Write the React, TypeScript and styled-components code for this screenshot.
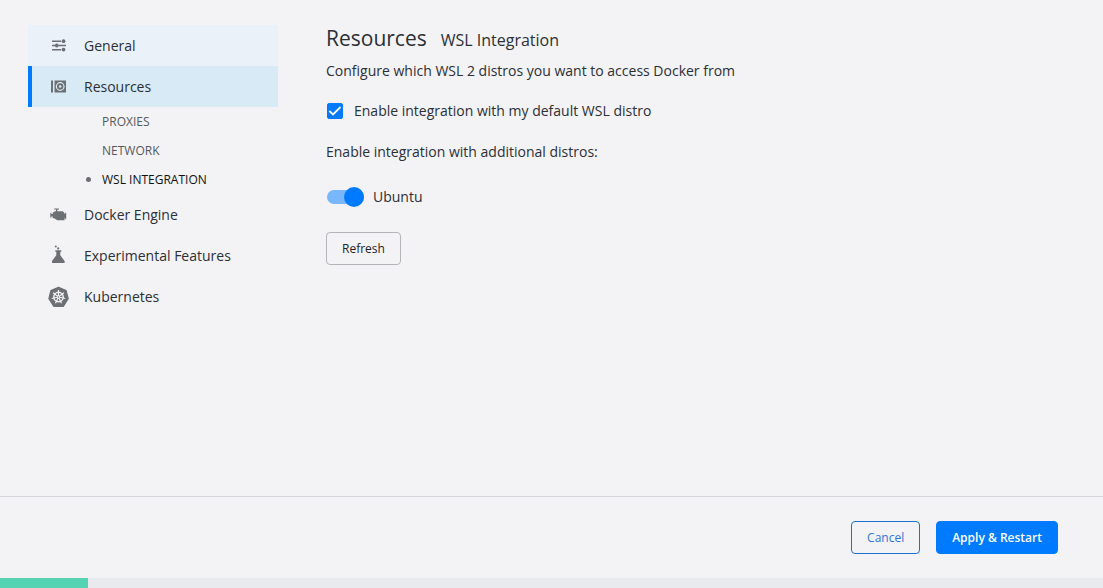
import React, { useState } from 'react';
import styled, { createGlobalStyle, css } from 'styled-components';

const GlobalStyle = createGlobalStyle`
  *, *::before, *::after { box-sizing: border-box; }
  body {
    margin: 0;
    background: #f3f3f6;
    color: #2b2f36;
    font-family: "Open Sans", "Noto Sans", sans-serif;
    font-size: 14px;
    line-height: 20px;
  }
  button, input { font-family: inherit; }
`;

const Page = styled.div`
  display: flex;
  flex-direction: column;
  min-height: 100vh;
`;

const Body = styled.div`
  display: flex;
  flex: 1;
  gap: 48px;
  padding: 25px 28px;
`;

const Sidebar = styled.nav`
  flex: 0 0 250px;
`;

const NavList = styled.ul`
  margin: 0;
  padding: 0;
  list-style: none;
`;

const NavLink = styled.a<{ $state?: 'hover' | 'active' }>`
  display: flex;
  align-items: center;
  gap: 14px;
  height: 41px;
  padding-left: 16px;
  border-left: 4px solid transparent;
  color: #2b2f36;
  text-decoration: none;
  ${({ $state }) => $state === 'hover' && css`
    background: #ebf1f8;
    border-left-color: #ebf1f8;
  `}
  ${({ $state }) => $state === 'active' && css`
    background: #d8eaf6;
    border-left-color: #007bff;
  `}
`;

const NavIcon = styled.svg`
  flex: none;
  width: 22px;
  height: 22px;
  fill: #6c6f73;
`;

const SubLink = styled.a<{ $current?: boolean }>`
  display: flex;
  align-items: center;
  gap: 11px;
  height: 29px;
  padding-left: 58px;
  color: ${({ $current }) => ($current ? '#111111' : '#55585e')};
  font-size: 12px;
  text-decoration: none;
  &::before {
    content: '';
    width: 5px;
    height: 5px;
    border-radius: 50%;
    background: ${({ $current }) => ($current ? '#6c6f73' : 'transparent')};
  }
`;

const Main = styled.main`
  display: flex;
  flex: 1;
  flex-direction: column;
  align-items: flex-start;
`;

const Header = styled.header`
  display: flex;
  align-items: baseline;
  gap: 14px;
`;

const Title = styled.h1`
  margin: 0;
  font-size: 21px;
  font-weight: 400;
  line-height: 26px;
`;

const Subtitle = styled.h2`
  margin: 0;
  font-size: 16px;
  font-weight: 400;
  line-height: 26px;
`;

const Text = styled.p`
  margin: 8px 0 0;
`;

const Choice = styled.label`
  display: flex;
  align-items: center;
  gap: 11px;
  margin: 20px 0 13px;
  padding-left: 1px;
`;

const Checkbox = styled.input`
  appearance: none;
  width: 16px;
  height: 16px;
  margin: 0;
  border: 1px solid #007bff;
  border-radius: 2px;
  &:checked {
    background: #007bff;
  }
`;

const CheckboxBox = styled.span`
  display: grid;
  > * { grid-area: 1 / 1; }
  svg { pointer-events: none; }
`;

const SwitchRow = styled.label`
  display: flex;
  align-items: center;
  gap: 9px;
  margin: 25px 0;
  padding-left: 1px;
`;

const Switch = styled.input`
  appearance: none;
  display: flex;
  align-items: center;
  width: 37px;
  height: 14px;
  margin: 0;
  border-radius: 7px;
  background: #c4c8ce;
  &::before {
    content: '';
    width: 20px;
    height: 20px;
    flex: none;
    border-radius: 50%;
    background: #ffffff;
  }
  &:checked {
    justify-content: flex-end;
    background: #78b7fb;
  }
  &:checked::before { background: #007bff; }
`;

const Button = styled.button<{ $kind?: 'outline' | 'primary' }>`
  height: 33px;
  padding: 0 15px;
  border: 1px solid #b3b5b9;
  border-radius: 4px;
  background: transparent;
  color: #1f2227;
  font-size: 12px;
  font-weight: 500;
  line-height: 16px;
  ${({ $kind }) => $kind === 'outline' && css`
    border-color: #1f6fd0;
    color: #2f74dd;
  `}
  ${({ $kind }) => $kind === 'primary' && css`
    border-color: #007bff;
    background: #007bff;
    color: #ffffff;
    font-weight: 600;
  `}
`;

const Footer = styled.footer`
  display: flex;
  justify-content: flex-end;
  gap: 16px;
  padding: 24px 45px;
  border-top: 1px solid #d3d5d9;
`;

const StatusBar = styled.div`
  height: 10px;
  background: #e9eaee;
`;

const Status = styled.div`
  width: 88px;
  height: 10px;
  background: #55d3b2;
`;

const SlidersIcon = () => (
  <NavIcon viewBox="0 0 22 22" aria-hidden="true">
    <path d="M4 5.500h9v1.400H4zM4 9.800h3v1.400H4zM10.500 9.800H18v1.400h-7.500zM4 14.100h9v1.400H4z" />
    <circle cx="15.500" cy="6.200" r="1.900" />
    <circle cx="8.800" cy="10.500" r="1.900" />
    <circle cx="15.500" cy="14.600" r="1.900" />
  </NavIcon>
);

const DriveIcon = () => (
  <NavIcon viewBox="0 0 22 22" aria-hidden="true">
    <path d="M3 4.500h2v12h-2z" />
    <path fillRule="evenodd" d="M6.500 4.500h11.500v12H6.500zM12.200 6.100a4.400 4.400 0 1 0 0 8.800a4.400 4.400 0 0 0 0-8.800zM12.200 7.300a3.200 3.200 0 1 1 0 6.400a3.200 3.200 0 0 1 0-6.400zM12.200 9.200a1.300 1.300 0 1 0 0 2.600a1.300 1.300 0 0 0 0-2.600z" />
  </NavIcon>
);

const EngineIcon = () => (
  <NavIcon viewBox="0 0 22 22" aria-hidden="true">
    <path d="M6.300 4.600h4.700v1H9.300V7.200h5.500l1.700 1.800v.9h.7V8.600l1 .4v6l-1 .4v-1.500h-.7v2.300H9.300L6 14.200H4.700v-1.700H3.300v1.300l-1-.4V9l1-.4v1.500h1.400V8.800L7 7.200h1V5.600H6.300z" />
  </NavIcon>
);

const FlaskIcon = () => (
  <NavIcon viewBox="0 0 22 22" aria-hidden="true">
    <circle cx="7.800" cy="1.600" r="1" />
    <circle cx="10.200" cy="3.400" r="1.100" />
    <path d="M7.300 5.200h6v1.500h-1v3.600l4.300 5.600v2H4v-2l4.300-5.600V6.700h-1z" />
  </NavIcon>
);

const KubernetesIcon = () => (
  <NavIcon viewBox="0 0 22 22" aria-hidden="true">
    <path d="M10.500 1.200 18.100 4.600 20.200 12.700 15.300 20.300H5.700L.9 12.700 2.900 4.600z" stroke="#6c6f73" strokeWidth="1.200" strokeLinejoin="round" />
    <g fill="none" stroke="#f3f3f6">
      <circle cx="10.500" cy="11" r="4.700" strokeWidth="1.500" />
      <path strokeWidth="1.200" d="M10.500 11V4M10.500 11l5.400-4.300M10.500 11l6.700 1.500M10.500 11l3 6.200M10.500 11l-3 6.200M10.500 11l-6.700 1.500M10.500 11L5.100 6.700" />
    </g>
    <circle cx="10.500" cy="11" r="1.500" fill="#f3f3f6" />
    <circle cx="10.500" cy="11" r="0.700" />
  </NavIcon>
);

export default function App() {
  const [useDefault, setUseDefault] = useState(true);
  const [ubuntu, setUbuntu] = useState(true);

  return (
    <Page>
      <GlobalStyle />
      <Body>
        <Sidebar aria-label="Settings">
          <NavList>
            <li><NavLink href="#general" $state="hover"><SlidersIcon />General</NavLink></li>
            <li>
              <NavLink href="#resources" $state="active"><DriveIcon />Resources</NavLink>
              <NavList>
                <li><SubLink href="#proxies">PROXIES</SubLink></li>
                <li><SubLink href="#network">NETWORK</SubLink></li>
                <li><SubLink href="#wsl" $current aria-current="page">WSL INTEGRATION</SubLink></li>
              </NavList>
            </li>
            <li><NavLink href="#engine"><EngineIcon />Docker Engine</NavLink></li>
            <li><NavLink href="#experimental"><FlaskIcon />Experimental Features</NavLink></li>
            <li><NavLink href="#kubernetes"><KubernetesIcon />Kubernetes</NavLink></li>
          </NavList>
        </Sidebar>
        <Main>
          <Header>
            <Title>Resources</Title>
            <Subtitle>WSL Integration</Subtitle>
          </Header>
          <Text>Configure which WSL 2 distros you want to access Docker from</Text>
          <Choice>
            <CheckboxBox>
              <Checkbox type="checkbox" checked={useDefault} onChange={(e) => setUseDefault(e.target.checked)} />
              {useDefault && (
                <svg width="16" height="16" viewBox="0 0 16 16" fill="none" stroke="#ffffff" strokeWidth="1.800" aria-hidden="true">
                  <path d="M2.300 7.800l3.700 3.700 7.500-7.500" />
                </svg>
              )}
            </CheckboxBox>
            Enable integration with my default WSL distro
          </Choice>
          <Text>Enable integration with additional distros:</Text>
          <SwitchRow>
            <Switch type="checkbox" role="switch" checked={ubuntu} onChange={(e) => setUbuntu(e.target.checked)} />
            Ubuntu
          </SwitchRow>
          <Button type="button">Refresh</Button>
        </Main>
      </Body>
      <Footer>
        <Button type="button" $kind="outline">Cancel</Button>
        <Button type="button" $kind="primary">Apply &amp; Restart</Button>
      </Footer>
      <StatusBar><Status /></StatusBar>
    </Page>
  );
}
